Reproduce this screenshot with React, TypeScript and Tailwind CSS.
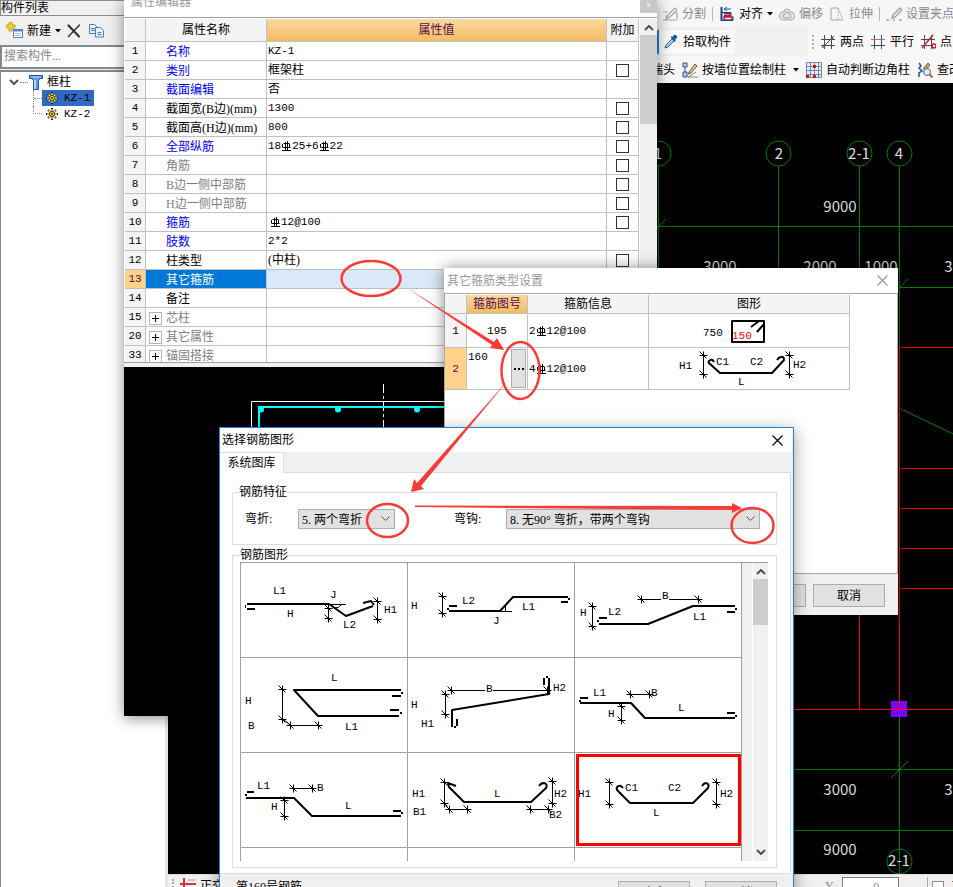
import React from "react";

const FONT = "font-['Liberation_Serif','Noto_Sans_CJK_SC',serif]";
const MONO = "font-['Liberation_Mono','Noto_Sans_CJK_SC',monospace] text-[11px]";

/* ---------- rebar drawings ---------- */

type Dim = { dir: "h" | "v"; at: number; from: number; to: number };
type Label = { t: string; x: number; y: number; color?: string; halo?: boolean };
type Shape = {
  bars: string;
  thin?: string;
  dots?: [number, number][];
  dims: Dim[];
  labels: Label[];
};

function Tick({ x, y }: { x: number; y: number }) {
  return <path d={`M${x - 4} ${y}h8M${x} ${y - 4}v8M${x - 4} ${y - 4}l7 7`} />;
}

function Drawing({ shape, x, y, w, h }: { shape: Shape; x: number; y: number; w: number; h: number }) {
  return (
    <svg width={w} height={h} viewBox={`${x} ${y} ${w} ${h}`} className="block" fill="none">
      <g stroke="#000" strokeWidth="1">
        {shape.thin && <path d={shape.thin} />}
        {shape.dims.map((d, i) =>
          d.dir === "v" ? (
            <g key={i}>
              <path d={`M${d.at} ${d.from}V${d.to}`} />
              <Tick x={d.at} y={d.from} />
              <Tick x={d.at} y={d.to} />
            </g>
          ) : (
            <g key={i}>
              <path d={`M${d.from} ${d.at}H${d.to}`} />
              <Tick x={d.from} y={d.at} />
              <Tick x={d.to} y={d.at} />
            </g>
          )
        )}
      </g>
      <path d={shape.bars} stroke="#000" strokeWidth="2" strokeLinejoin="round" />
      {shape.dots?.map(([dx, dy], i) => (
        <rect key={i} x={dx - 1} y={dy - 1} width="2" height="2" fill="#000" />
      ))}
      <g fill="#000" fontSize="11" fontFamily="'Liberation Mono', monospace">
        {shape.labels.map((l, i) => (
          <React.Fragment key={i}>
            {l.halo && <rect x={l.x - 1} y={l.y - 9} width="8" height="10" fill="#fff" />}
            <text x={l.x} y={l.y} fill={l.color ?? "#000"}>
              {l.t}
            </text>
          </React.Fragment>
        ))}
      </g>
    </svg>
  );
}

const shapes: Shape[] = [
  {
    bars: "M247 604H329L346 616L373 606M247 609H255M363 603L371 601L374 605",
    thin: "M329 604.5H346M341 605q-2 3 -6 3M245.5 605v3",
    dims: [
      { dir: "v", at: 328.5, from: 608.5, to: 618.5 },
      { dir: "v", at: 377.5, from: 601.5, to: 619.5 },
    ],
    labels: [
      { t: "L1", x: 273, y: 594 },
      { t: "H", x: 287, y: 617 },
      { t: "J", x: 330, y: 598 },
      { t: "L2", x: 343, y: 628 },
      { t: "H1", x: 384, y: 613 },
    ],
  },
  {
    bars: "M449 611H500L513 597H568M449 606H457M561 602H568",
    thin: "M500 611.5H512M505.5 611V606",
    dots: [[448, 609], [569, 599]],
    dims: [{ dir: "v", at: 442.5, from: 596.5, to: 613.5 }],
    labels: [
      { t: "H", x: 411, y: 609 },
      { t: "L2", x: 462, y: 604 },
      { t: "J", x: 493, y: 624 },
      { t: "L1", x: 522, y: 610 },
    ],
  },
  {
    bars: "M599 624H648L693 606H735M599 618H607M727 612H735",
    dots: [[598, 621], [736, 609]],
    dims: [
      { dir: "v", at: 592.5, from: 606.5, to: 626.5 },
      { dir: "h", at: 599.5, from: 641.5, to: 698.5 },
    ],
    labels: [
      { t: "H", x: 580, y: 616 },
      { t: "L2", x: 608, y: 615 },
      { t: "B", x: 662, y: 599, halo: true },
      { t: "L1", x: 693, y: 620 },
    ],
  },
  {
    bars: "M401 690H294L318 716H399M392 696H401M390 710H399",
    thin: "M283 719L290 725",
    dots: [[402, 693], [401, 713]],
    dims: [
      { dir: "v", at: 282.5, from: 689.5, to: 719.5 },
      { dir: "h", at: 725.5, from: 290.5, to: 318.5 },
    ],
    labels: [
      { t: "L", x: 331, y: 681 },
      { t: "H", x: 245, y: 704 },
      { t: "B", x: 248, y: 729 },
      { t: "L1", x: 345, y: 730 },
    ],
  },
  {
    bars: "M452 727V710L549 694V678M457 719V726M544 678V685",
    dots: [[455, 727], [547, 677]],
    dims: [
      { dir: "h", at: 690.5, from: 451.5, to: 547.5 },
      { dir: "v", at: 445.5, from: 694.5, to: 714.5 },
    ],
    labels: [
      { t: "B", x: 486, y: 692, halo: true },
      { t: "H", x: 411, y: 708 },
      { t: "H1", x: 421, y: 727 },
      { t: "H2", x: 553, y: 691 },
    ],
  },
  {
    bars: "M580 703H631L645 718H735M580 698H588M727 713H735",
    dots: [[580, 701], [736, 716]],
    dims: [
      { dir: "h", at: 694.5, from: 630.5, to: 649.5 },
      { dir: "v", at: 621.5, from: 706.5, to: 720.5 },
    ],
    labels: [
      { t: "L1", x: 593, y: 696 },
      { t: "B", x: 651, y: 696 },
      { t: "H", x: 608, y: 717 },
      { t: "L", x: 678, y: 711 },
    ],
  },
  {
    bars: "M246 798H294L312 816H401M247 792H254M393 811H401",
    dots: [[246, 795], [402, 813]],
    dims: [
      { dir: "h", at: 788.5, from: 293.5, to: 312.5 },
      { dir: "v", at: 284.5, from: 800.5, to: 816.5 },
    ],
    labels: [
      { t: "L1", x: 257, y: 789 },
      { t: "B", x: 317, y: 791 },
      { t: "H", x: 271, y: 810 },
      { t: "L", x: 345, y: 809 },
    ],
  },
  {
    bars: "M456 786L448 783L449 787L464 802H531L546 788q2 -4 -2 -5q-3 0 -5 3",
    dims: [
      { dir: "v", at: 444.5, from: 782.5, to: 803.5 },
      { dir: "h", at: 809.5, from: 449.5, to: 467.5 },
      { dir: "v", at: 552.5, from: 781.5, to: 803.5 },
      { dir: "h", at: 809.5, from: 530.5, to: 548.5 },
    ],
    labels: [
      { t: "H1", x: 412, y: 797 },
      { t: "B1", x: 413, y: 815 },
      { t: "L", x: 494, y: 797 },
      { t: "H2", x: 554, y: 797 },
      { t: "B2", x: 549, y: 818 },
    ],
  },
  {
    bars: "M623 788q-3 -4 -6 -1q-1 2 1 4L630 803H693L708 788q2 -4 -2 -5q-2 0 -4 3",
    dims: [
      { dir: "v", at: 609.5, from: 782.5, to: 804.5 },
      { dir: "v", at: 716.5, from: 782.5, to: 804.5 },
    ],
    labels: [
      { t: "H1", x: 578, y: 797 },
      { t: "C1", x: 625, y: 791 },
      { t: "C2", x: 668, y: 791 },
      { t: "L", x: 653, y: 816 },
      { t: "H2", x: 720, y: 797 },
    ],
  },
];

const hoop: Shape = {
  bars: "M732 321H764V342H732ZM751 327L759 321M757 332L764 324",
  dims: [],
  labels: [
    { t: "750", x: 703, y: 336 },
    { t: "150", x: 732, y: 339, color: "#f00" },
  ],
};

const hooked: Shape = {
  bars: "M714 362q-2 -4 -5 -1q-1 2 1 3L720 373H772L784 360q0 -4 -3 -3q-2 0 -4 3",
  dims: [
    { dir: "v", at: 703.5, from: 355.5, to: 374.5 },
    { dir: "v", at: 789.5, from: 355.5, to: 374.5 },
  ],
  labels: [
    { t: "H1", x: 679, y: 369 },
    { t: "C1", x: 716, y: 365 },
    { t: "C2", x: 750, y: 365 },
    { t: "L", x: 738, y: 385 },
    { t: "H2", x: 793, y: 368 },
  ],
};

/* ---------- small parts ---------- */

function Rebar() {
  return (
    <svg width="9" height="10" viewBox="0 0 9 10" className="mx-px inline-block align-[-2px]" fill="none" stroke="#000">
      <path d="M3.500 1v8M5.500 0v9M1.500 2.500h6M7.500 3v4M.5 3v3M.5 6.500h8M0 9.500h9" />
    </svg>
  );
}

function Chevron({ up, className }: { up?: boolean; className?: string }) {
  return (
    <svg width="10" height="6" viewBox="0 0 10 6" fill="none" stroke="#505050" strokeWidth="2" className={className}>
      <path d={up ? "M1 5l4-4l4 4" : "M1 1l4 4l4-4"} />
    </svg>
  );
}

function CloseIcon({ color }: { color: string }) {
  return (
    <svg width="11" height="11" viewBox="0 0 11 11" fill="none" stroke={color} strokeWidth="1.2">
      <path d="M.5 .5l10 10M10.5 .5l-10 10" />
    </svg>
  );
}

function Caret() {
  return (
    <svg width="6" height="4" viewBox="0 0 6 4" className="shrink-0">
      <path d="M0 0h6l-3 3.5z" fill="#000" />
    </svg>
  );
}

/* ---------- component list ---------- */

function Gear() {
  return (
    <svg width="12" height="12" viewBox="0 0 12 12" className="shrink-0" fill="none">
      <path d="M6 0v12M0 6h12M2 2l8 8M10 2l-8 8" stroke="#222" strokeWidth="2" />
      <path d="M6 1v10M1 6h10M2.500 2.500l7 7M9.500 2.500l-7 7" stroke="#ffe94a" strokeWidth="1.300" />
      <circle cx="6" cy="6" r="2.5" fill="#ffe94a" stroke="#222" strokeWidth=".8" />
      <circle cx="6" cy="6" r="1" fill="#222" />
    </svg>
  );
}

function ComponentList() {
  return (
    <aside className="flex w-[168px] shrink-0 flex-col border-r-[3px] border-[#e4e4e4] bg-[#f0f0f0]">
      <h2 className="h-4 border-y border-l border-[#8c8c8c] leading-[15px]">构件列表</h2>
      <div className="flex h-[29px] items-center px-1.5">
        <button className="flex items-center gap-1">
          <svg width="17" height="17" viewBox="0 0 17 17" fill="none">
            <rect x="7.5" y="7.5" width="9" height="8" fill="#fff" stroke="#5b84b8" />
            <path d="M7 8.500h10" stroke="#5b84b8" strokeWidth="2" />
            <path d="M9 11.500h6M9 13.500h6" stroke="#9db7dd" />
            <path d="M3 0h3v3h3v3h-3v3h-3v-3h-3v-3h3z" fill="#f5d32c" stroke="#b58d00" strokeWidth=".7" />
          </svg>
          <span>新建</span>
          <Caret />
        </button>
        <button aria-label="删除" className="ml-1.5">
          <svg width="14" height="14" viewBox="0 0 14 14" fill="none" stroke="#333" strokeLinecap="round">
            <path d="M1.500 1.500l10.500 11" strokeWidth="2.200" />
            <path d="M12.500 1l-11 11.500" strokeWidth="1.500" />
          </svg>
        </button>
        <button aria-label="复制" className="ml-2">
          <svg width="16" height="14" viewBox="0 0 16 14" fill="#e8f1fc" stroke="#4a7fc0">
            <path d="M.5 .5h5l3 3v6h-8z" />
            <path d="M6.500 3.500h5l3 3v6.500h-8z" />
            <path d="M2 4.500h4M2 6.500h4M8.500 8.500h4M8.500 10.500h4" />
          </svg>
        </button>
      </div>
      <input
        aria-label="搜索构件"
        placeholder="搜索构件..."
        className="h-6 border-2 border-[#828790] bg-white px-0.5 pb-0.5 placeholder:text-[#888]"
      />
      <div className="mt-px flex-1 border-l border-t-2 border-[#828790] bg-white pl-2 pt-0.5">
        <div className="flex h-4 items-center">
          <Chevron />
          <span className="mx-px w-2 border-t border-dotted border-[#888]" />
          <svg width="14" height="15" viewBox="0 0 14 15" className="mr-1">
            <path d="M.5 .5h13v3h-3v1l-1 1v9h-5v-9l-1-1v-1h-3z" fill="#5b9be8" stroke="#234f9c" />
            <path d="M6 5v9" stroke="#cfe4ff" strokeWidth="1.500" />
            <path d="M2 2h10" stroke="#bcd8fb" />
          </svg>
          <span>框柱</span>
        </div>
        <div className="ml-6 border-l border-dotted border-[#888]">
          <div className="flex h-4 items-center">
            <span className="w-2 border-t border-dotted border-[#888]" />
            <span className="flex h-4 items-center gap-1.5 bg-[#316ac5] pl-1 pr-1">
              <Gear />
              <span className={MONO}>KZ-1</span>
            </span>
          </div>
        </div>
        <div className="ml-6 flex h-4 items-center">
          <span className="h-2 w-[9px] self-start border-b border-l border-dotted border-[#888]" />
          <span className="flex h-4 items-center gap-1.5 pl-1">
            <Gear />
            <span className={MONO}>KZ-2</span>
          </span>
        </div>
      </div>
    </aside>
  );
}

/* ---------- toolbars ---------- */

function Tool({ icon, text, muted, caret }: { icon: React.ReactNode; text: string; muted?: boolean; caret?: boolean }) {
  return (
    <button className={`flex shrink-0 items-center gap-1 whitespace-nowrap ${muted ? "text-[#8a8a8a]" : "text-black"}`}>
      <svg width="16" height="16" viewBox="0 0 16 16" fill="none">
        {icon}
      </svg>
      {text}
      {caret && <Caret />}
    </button>
  );
}

const Sep = () => <span className="h-3.5 w-px shrink-0 bg-[#b8b8b8]" />;

const hash = "M4.500 1v14M11.500 1v14M1 5.500h14M1 11.500h14";

function Toolbars() {
  return (
    <header className="h-[83px] shrink-0 overflow-hidden bg-[#f0f0f0] pl-[489px]">
      <div className="flex h-[27px] items-center gap-1.5 bg-[#f6f6f6] pl-[5px]">
        <Tool muted text="分割" icon={<path d="M1 6h5M1 14h14M3 10h4M13 2l-7 7l-2 4l4-2l7-7zM12 7h3v6" stroke="#a5a5a5" strokeWidth="1.200" />} />
        <Sep />
        <Tool
          caret
          text="对齐"
          icon={
            <>
              <path d="M2.500 1v14" stroke="#1c3f8f" strokeWidth="2" />
              <path d="M5 3h7M5 3l3-2M5 3l3 2" stroke="#2c59b8" />
              <path d="M5 7.500h6v2h-6M5 11h8v3h-8z" stroke="#b3202b" strokeWidth="1.500" />
              <path d="M3 6.500h9v4M3 14.500h11v-4" stroke="#1c3f8f" />
            </>
          }
        />
        <Tool muted text="偏移" icon={<><path d="M5 6a3 3 0 0 1 6 0a4 4 0 0 1 1 8h-8a4 4 0 0 1 1-8z" fill="#e3e3e3" stroke="#a5a5a5" /><path d="M6 8a2 2 0 0 1 4 0a1.500 1.500 0 0 1 0 4h-4a2 2 0 0 1 0-4z" stroke="#a5a5a5" /></>} />
        <Tool muted text="拉伸" icon={<><path d="M9 2h-7v12h12" stroke="#a5a5a5" /><path d="M9 2v12" stroke="#b5b5b5" strokeDasharray="2 1" /><path d="M9 2l5 12" stroke="#a5a5a5" strokeDasharray="3 1" /></>} />
        <Sep />
        <Tool muted text="设置夹点" icon={<path d="M14 2l-7 7l-1 3l3-1l7-7zM0 14h3M7 14h2M13 14h3" stroke="#a5a5a5" strokeWidth="1.500" />} />
      </div>
      <div className="flex h-[29px] items-center">
        <div className="flex h-6 w-[78px] shrink-0 items-center border-l-2 border-[#1883d7] bg-[#f9f9f9] pl-1">
          <Tool
            text="拾取构件"
            icon={
              <>
                <path d="M2 14l1-3l6-6l2 2l-6 6z" fill="#a9d4f5" stroke="#2b5f9e" />
                <path d="M8 4l4 4l1-1l-1-1l2-2q1-2-1-3q-2-1-3 1l-1 1l-1-1z" fill="#1f5fa8" />
              </>
            }
          />
        </div>
        <div className="ml-[73px] flex h-7 flex-1 items-center gap-1.5 bg-[#f8f8f8] pl-1">
          <span className="h-3.5 w-0 border-l-2 border-dotted border-[#b0b0b0]" />
          <Tool text="两点" icon={<><path d={hash} stroke="#3a4a80" /><path d="M2 14L14 2" stroke="#c22" /><circle cx="4" cy="12" r="1.500" fill="#2a7a2a" /><circle cx="12" cy="4" r="1.500" fill="#2a7a2a" /></>} />
          <Tool text="平行" icon={<><path d={hash} stroke="#3a4a80" /><path d="M1 5.500h14" stroke="#c66" /></>} />
          <Tool text="点" icon={<><path d={hash} stroke="#3a4a80" /><path d="M2 14L13 1" stroke="#c22" strokeWidth="1.500" /><circle cx="14" cy="12" r="2" fill="#fff" stroke="#d11" strokeWidth="1.500" /></>} />
        </div>
      </div>
      <div className="flex h-[27px] items-center gap-[7px] overflow-hidden bg-[#f7f7f7]">
        <button className="flex w-[18px] shrink-0 justify-end overflow-hidden whitespace-nowrap">端头</button>
        <Tool
          text="按墙位置绘制柱"
          icon={
            <>
              <path d="M1 1h4v4h-4zM1 10h4v5h-4zM3 5v5" stroke="#2b4f9e" fill="#bcd0f2" />
              <path d="M6 15h10M6 15l8-5" stroke="#888" />
              <path d="M7 10l6-8l2 2l-6 7l-3 1z" fill="#e9c46a" stroke="#664" />
            </>
          }
        />
        <Caret />
        <Tool
          text="自动判断边角柱"
          icon={
            <>
              <path d="M.5 .5h15v15h-15zM.5 4.500h15M.5 8.500h15M.5 12.500h15M4.500 .5v15M8.500 .5v15M12.500 .5v15" stroke="#7088b0" fill="#e9f0fb" />
              <path d="M7 3h3v3h-3zM0 13h3v3h-3zM7 13h3v3h-3z" fill="#e01010" />
            </>
          }
        />
        <Tool
          text="查改"
          icon={
            <>
              <path d="M2 1l2 3l-2 2l3 3l-3 2v4" stroke="#2b4f9e" strokeWidth="1.500" />
              <path d="M6 7l5-6l2 2l-5 6" fill="#c9a35a" stroke="#664" />
              <circle cx="10" cy="10" r="3.500" fill="#d6ebff" stroke="#667" />
              <path d="M12.500 12.500l3 3" stroke="#b5651d" strokeWidth="2" />
            </>
          }
        />
      </div>
    </header>
  );
}

/* ---------- drawing canvas ---------- */

const canvasText: [string, number, number][] = [
  ["1", 658, 159],
  ["2", 779, 159],
  ["2-1", 859, 159],
  ["4", 899, 159],
  ["9000", 840, 212],
  ["3000", 720, 272],
  ["2000", 820, 272],
  ["1000", 881, 272],
  ["3000", 961, 272],
  ["3000", 840, 795],
  ["3000", 961, 795],
  ["9000", 840, 855],
  ["2-1", 899, 866],
];

function Canvas() {
  return (
    <main className="min-h-0 flex-1 overflow-hidden bg-black">
      <svg width="100%" height="100%" className="block" fill="none">
        <g transform="translate(-168 -83)">
          <g stroke="#008000">
            <path d="M658.500 166V620M778.500 166V347M859.500 166V347M899.500 166V347M899.500 709V848M899.500 848V874" />
            <path d="M657 226.500H2400M899 287.500H2400M780 769.500H2400M780 830.500H2400M657 228l9-9M899 288l9-9M899 408L953 434L1100 505M891 778l17-17" />
            {[
              [658.5, 153.5],
              [778.5, 153.5],
              [859.5, 153.5],
              [899.5, 153.5],
              [899.5, 861.5],
            ].map(([x, y]) => (
              <circle key={`${x}-${y}`} cx={x} cy={y} r="12.500" />
            ))}
          </g>
          <rect x="891" y="701" width="16" height="16" fill="#8000ff" />
          <path
            stroke="#f00"
            d="M899.500 347V709M859.500 600V709M780 709.500H2400M899 347.500H2400M899 468.500H2400M899 508.500H2400M899 548.500H2400M899 588.500H2400"
          />
          <g fill="#dcdcdc" fontSize="15" fontFamily="'Noto Sans CJK SC', sans-serif" textAnchor="middle">
            {canvasText.map(([t, x, y]) => (
              <text key={`${t}-${x}-${y}`} x={x} y={y}>
                {t}
              </text>
            ))}
          </g>
        </g>
      </svg>
    </main>
  );
}

function StatusBar() {
  return (
    <footer className="flex h-[13px] shrink-0 items-start overflow-hidden border-t border-[#ddd] bg-[#f0f0f0] pl-1 pt-0.5 leading-[18px]">
      <span className="mt-0.5 h-3 w-0 border-l-2 border-dotted border-[#b0b0b0]" />
      <button className="ml-1.5 flex w-10 gap-1 whitespace-nowrap">
        <svg width="16" height="16" viewBox="0 0 16 16" className="shrink-0" fill="none" stroke="#d33">
          <path d="M4 1v15M0 7h16" strokeWidth="2" />
          <path d="M8 3h7" stroke="#99a" />
        </svg>
        正交
      </button>
      <label className="ml-[605px] flex gap-2 text-[#888]">
        <span>Y</span>
        <input defaultValue="0" className="h-5 w-[57px] border border-[#7a7a7a] bg-white pl-3 text-center" />
      </label>
      <span className="ml-7 h-4 w-px shrink-0 bg-[#aaa]" />
      <label className="ml-1 flex shrink-0 gap-2 whitespace-nowrap">
        <input type="checkbox" className="mt-1 size-3 appearance-none border border-[#888] bg-white" />
        旋转
      </label>
    </footer>
  );
}

/* ---------- property editor ---------- */

type Prop = { n: number; name: string; value?: React.ReactNode; tone?: "blue" | "gray"; check?: boolean; group?: boolean; cjk?: boolean };

const props: Prop[] = [
  { n: 1, name: "名称", value: "KZ-1", tone: "blue" },
  { n: 2, name: "类别", value: "框架柱", tone: "blue", check: true, cjk: true },
  { n: 3, name: "截面编辑", value: "否", tone: "blue", cjk: true },
  { n: 4, name: "截面宽(B边)(mm)", value: "1300", check: true },
  { n: 5, name: "截面高(H边)(mm)", value: "800", check: true },
  { n: 6, name: "全部纵筋", value: <>18<Rebar />25+6<Rebar />22</>, tone: "blue", check: true },
  { n: 7, name: "角筋", tone: "gray", check: true },
  { n: 8, name: "B边一侧中部筋", tone: "gray", check: true },
  { n: 9, name: "H边一侧中部筋", tone: "gray", check: true },
  { n: 10, name: "箍筋", value: <span className="ml-0.5"><Rebar />12@100</span>, tone: "blue", check: true },
  { n: 11, name: "肢数", value: "2*2", tone: "blue" },
  { n: 12, name: "柱类型", value: "(中柱)", check: true, cjk: true },
  { n: 13, name: "其它箍筋" },
  { n: 14, name: "备注" },
  { n: 15, name: "芯柱", tone: "gray", group: true },
  { n: 20, name: "其它属性", tone: "gray", group: true },
  { n: 33, name: "锚固搭接", tone: "gray", group: true },
];

const cell = "border-b border-r border-[#c0c0c0] p-0 font-normal";

function PropertyEditor() {
  return (
    <section className="absolute left-[124px] top-0 flex h-[716px] w-[533px] flex-col bg-[#f0f0f0] shadow-[0_2px_14px_rgba(0,0,0,0.45)]">
      <div className="flex h-[17px] shrink-0 justify-between overflow-hidden bg-white pl-[7px]">
        <h2 className="-mt-1.5 leading-[16px] text-[#999]">属性编辑器</h2>
        <button aria-label="关闭" className="flex h-[13px] w-[17px] justify-center bg-[#c8c8c8] text-[9px] leading-[8px] text-white">
          x
        </button>
      </div>
      <div className="flex h-[346px] shrink-0 overflow-hidden border-y border-[#a0a0a0] bg-white pl-px pt-px">
        <table className="h-fit flex-1 table-fixed border-separate border-spacing-0">
          <colgroup>
            <col className="w-[21px]" />
            <col className="w-[121px]" />
            <col />
            <col className="w-8" />
          </colgroup>
          <thead>
            <tr className="h-[23px]">
              <th className={`${cell} bg-[#f4f4f4]`} />
              <th className={`${cell} bg-[#f4f4f4]`}>属性名称</th>
              <th className={`${cell} bg-linear-to-b from-[#f9d89c] to-[#f1bd62] text-[#5a0a4a]`}>属性值</th>
              <th className={`${cell} whitespace-nowrap bg-[#f4f4f4]`}>附加</th>
            </tr>
          </thead>
          <tbody>
            {props.map((p) => {
              const sel = p.n === 13;
              const tone = sel ? "text-white" : p.tone === "blue" ? "text-[#0000f0]" : p.tone === "gray" ? "text-[#808080]" : "text-black";
              return (
                <tr key={p.n} className="h-[19px]">
                  <td className={`${cell} ${MONO} text-center ${sel ? "bg-[#ffd18a] text-[#5a0a4a]" : "bg-[#f4f4f4]"}`}>{p.n}</td>
                  <td className={`${cell} ${sel ? "bg-[#0078d7]" : ""}`}>
                    <div className={`flex h-[18px] items-center whitespace-nowrap pt-0.5 ${tone} ${p.group ? "pl-[3px]" : "pl-5"}`}>
                      {p.group && (
                        <button aria-label="展开" className="mr-1 flex size-[13px] items-center justify-center border border-[#b5b5b5] bg-white">
                          <svg width="7" height="7" viewBox="0 0 7 7" stroke="#000">
                            <path d="M0 3.500h7M3.500 0v7" />
                          </svg>
                        </button>
                      )}
                      {p.name}
                    </div>
                  </td>
                  <td className={`${cell} ${sel ? "bg-[#d9e9f7]" : ""}`}>
                    <div className={`h-[18px] whitespace-nowrap pl-px leading-[18px] ${p.cjk ? "" : MONO}`}>{p.value}</div>
                  </td>
                  <td className={cell}>
                    {p.check && (
                      <input
                        type="checkbox"
                        aria-label={`${p.name} 附加`}
                        className="mx-auto block size-[13px] appearance-none border border-[#333] bg-white"
                      />
                    )}
                  </td>
                </tr>
              );
            })}
          </tbody>
        </table>
        <div className="ml-px flex w-[17px] flex-col items-center bg-[#f0f0f0] pt-1.5">
          <Chevron up />
          <span className="mt-1 h-[89px] w-full bg-[#cdcdcd]" />
        </div>
      </div>
      <div className="mt-1 flex-1 bg-black">
        <svg width="100%" height="100%" className="block" fill="none">
          <g transform="translate(-124 -367)">
            <path d="M251.500 715V401.500H640" stroke="#fff" />
            <path d="M383.500 384V432" stroke="#fff" strokeDasharray="9 3 3 3" />
            <path d="M259 715V407H640" stroke="#0ff" strokeWidth="2" />
            {[261, 338, 417, 496].map((x) => (
              <circle key={x} cx={x} cy="409.500" r="3" fill="#0ff" />
            ))}
          </g>
        </svg>
      </div>
    </section>
  );
}

/* ---------- stirrup type window ---------- */

const btn = "border border-[#adadad] bg-[#e1e1e1] text-center";

function StirrupWindow() {
  return (
    <section className="absolute left-[444px] top-[268px] flex h-[347px] w-[454px] flex-col bg-[#f0f0f0] shadow-[0_0_14px_rgba(0,0,0,0.45)]">
      <div className="flex h-[25px] items-center justify-between bg-white pl-[3px] pr-2.5">
        <h2 className="text-[#999]">其它箍筋类型设置</h2>
        <button aria-label="关闭">
          <CloseIcon color="#999" />
        </button>
      </div>
      <div className="flex-1 border border-[#a8a8a8] bg-white pt-px">
        <table className="w-[405px] table-fixed border-separate border-spacing-0">
          <colgroup>
            <col className="w-[22px]" />
            <col className="w-[61px]" />
            <col className="w-[121px]" />
            <col />
          </colgroup>
          <thead>
            <tr className="h-[19px]">
              <th className={`${cell} bg-[#f4f4f4]`} />
              <th className={`${cell} bg-linear-to-b from-[#f9d89c] to-[#f1bd62] text-[#5a0a4a]`}>箍筋图号</th>
              <th className={`${cell} bg-[#f4f4f4]`}>箍筋信息</th>
              <th className={`${cell} bg-[#f4f4f4]`}>图形</th>
            </tr>
          </thead>
          <tbody>
            <tr className="h-[34px]">
              <td className={`${cell} ${MONO} bg-[#f4f4f4] text-center`}>1</td>
              <td className={`${cell} ${MONO} text-center`}>195</td>
              <td className={`${cell} ${MONO}`}>
                <div className="pl-px">2<Rebar />12@100</div>
              </td>
              <td className={cell}>
                <Drawing shape={hoop} x={649} y={314} w={200} h={33} />
              </td>
            </tr>
            <tr className="h-[42px]">
              <td className={`${cell} ${MONO} bg-[#ffd18a] text-center text-[#5a0a4a]`}>2</td>
              <td className={cell}>
                <div className={`flex h-[41px] justify-between pl-px pr-px pt-px leading-[16px] ${MONO}`}>
                  160
                  <button aria-label="选择图形" className="flex h-[39px] w-[15px] items-center justify-center gap-0.5 border border-[#adadad] bg-[#e1e1e1]">
                    <i className="size-0.5 bg-black" />
                    <i className="size-0.5 bg-black" />
                    <i className="size-0.5 bg-black" />
                  </button>
                </div>
              </td>
              <td className={`${cell} ${MONO}`}>
                <div className="pl-px">4<Rebar />12@100</div>
              </td>
              <td className={cell}>
                <Drawing shape={hooked} x={649} y={348} w={200} h={41} />
              </td>
            </tr>
          </tbody>
        </table>
      </div>
      <div className="flex h-[41px] justify-end gap-[7px] pr-[13px] pt-2.5">
        <button className={`${btn} h-[23px] w-[72px]`}>确定</button>
        <button className={`${btn} h-[23px] w-[72px]`}>取消</button>
      </div>
    </section>
  );
}

/* ---------- rebar shape picker ---------- */

function Combo({ id, value, className }: { id: string; value: string; className: string }) {
  return (
    <span className={`relative h-5 ${className}`}>
      <select id={id} className="block h-5 w-full appearance-none border border-[#adadad] bg-[#e1e1e1] pl-[3px] pt-px">
        <option>{value}</option>
      </select>
      <svg width="9" height="6" viewBox="0 0 9 6" fill="none" stroke="#555" className="pointer-events-none absolute right-[5px] top-[7px]">
        <path d="M.5 .5l4 4l4-4" />
      </svg>
    </span>
  );
}

function ShapePicker() {
  return (
    <section className="absolute left-[219px] top-[427px] flex h-[500px] w-[575px] flex-col border border-[#1883d7] bg-[#f0f0f0] shadow-[0_4px_16px_rgba(0,0,0,0.4)]">
      <div className="flex h-6 items-center justify-between bg-white pl-0.5 pr-2.5">
        <h2>选择钢筋图形</h2>
        <button aria-label="关闭">
          <CloseIcon color="#000" />
        </button>
      </div>
      <div className="flex h-[21px]">
        <button className="h-[21px] w-16 border-r border-t border-[#dcdcdc] bg-white">系统图库</button>
        <span className="mr-0.5 flex-1 border-b border-[#dcdcdc]" />
      </div>
      <div className="mr-0.5 border-b border-r border-[#dcdcdc] bg-white pb-[5px] pl-3 pr-[13px] pt-3">
        <fieldset className="h-[60px] border border-[#dcdcdc]">
          <legend className="ml-1.5 leading-[14px]">钢筋特征</legend>
          <div className="mt-2.5 flex h-5 items-center pl-3 pr-4">
            <label htmlFor="bend" className="w-[53px]">弯折:</label>
            <Combo id="bend" value="5. 两个弯折" className="w-[97px]" />
            <label htmlFor="hook" className="ml-[59px] w-[52px]">弯钩:</label>
            <Combo id="hook" value="8. 无90° 弯折，带两个弯钩" className="flex-1" />
          </div>
        </fieldset>
        <fieldset className="mt-[3px] border border-[#dcdcdc] pb-1.5 pl-[7px] pr-2">
          <legend className="leading-[14px]">钢筋图形</legend>
          <div className="flex h-[299px] overflow-hidden border-t border-[#a0a0a0]">
            <div className="grid h-fit grid-cols-[repeat(3,167px)] border-l border-[#a0a0a0]">
              {shapes.map((s, i) => (
                <button key={i} aria-label={`图形 ${i + 1}`} className="relative h-[95px] border-b border-r border-[#a0a0a0] bg-white">
                  <Drawing shape={s} x={241 + (i % 3) * 167} y={563 + Math.floor(i / 3) * 95} w={166} h={94} />
                  {i === 8 && <span className="absolute inset-y-px left-px right-0 border-3 border-[#f00]" />}
                </button>
              ))}
              {[0, 1, 2].map((i) => (
                <span key={i} className="h-4 border-r border-[#a0a0a0]" />
              ))}
            </div>
            <span className="w-2.5 bg-[#f0f0f0]" />
            <div className="ml-px flex flex-1 flex-col items-center bg-[#f0f0f0] pb-1.5 pt-1.5">
              <Chevron up />
              <span className="mt-1 h-[46px] w-[15px] bg-[#cdcdcd]" />
              <Chevron className="mt-auto" />
            </div>
          </div>
        </fieldset>
      </div>
      <div className="flex items-start gap-[15px] pl-4 pr-4 pt-[5px]">
        <span className="flex-1 whitespace-nowrap leading-[16px]">第160号钢筋</span>
        <button className={`${btn} mt-0.5 h-[23px] w-[72px]`}>确定</button>
        <button className={`${btn} mt-0.5 h-[23px] w-[72px]`}>取消</button>
      </div>
    </section>
  );
}

/* ---------- red marks ---------- */

function Marks() {
  return (
    <svg width="953" height="887" className="pointer-events-none absolute left-0 top-0" fill="none">
      <g stroke="#f93a37" strokeWidth="2.500">
        <ellipse cx="371" cy="278.500" rx="29.500" ry="17.500" />
        <ellipse cx="520.500" cy="370.500" rx="19" ry="28.500" />
        <ellipse cx="387.500" cy="520.500" rx="20.500" ry="16.500" />
        <ellipse cx="752.500" cy="525.500" rx="21" ry="17.500" />
      </g>
      <g fill="#f93a37">
        <path d="M407 288L494 342L497 338L504 350L490 348L492 345Z" />
        <path d="M509 379L421 486L424 489L411 492L414 479L417 483Z" />
        <path d="M415 505.500L732 506V503L742 508L732 513V510L415 507Z" />
      </g>
    </svg>
  );
}

export default function App() {
  return (
    <div className={`relative flex h-screen w-full overflow-hidden bg-[#f0f0f0] text-[12px] leading-[16px] text-black ${FONT}`}>
      <ComponentList />
      <div className="flex min-w-0 flex-1 flex-col">
        <Toolbars />
        <Canvas />
        <StatusBar />
      </div>
      <PropertyEditor />
      <StirrupWindow />
      <ShapePicker />
      <Marks />
    </div>
  );
}
